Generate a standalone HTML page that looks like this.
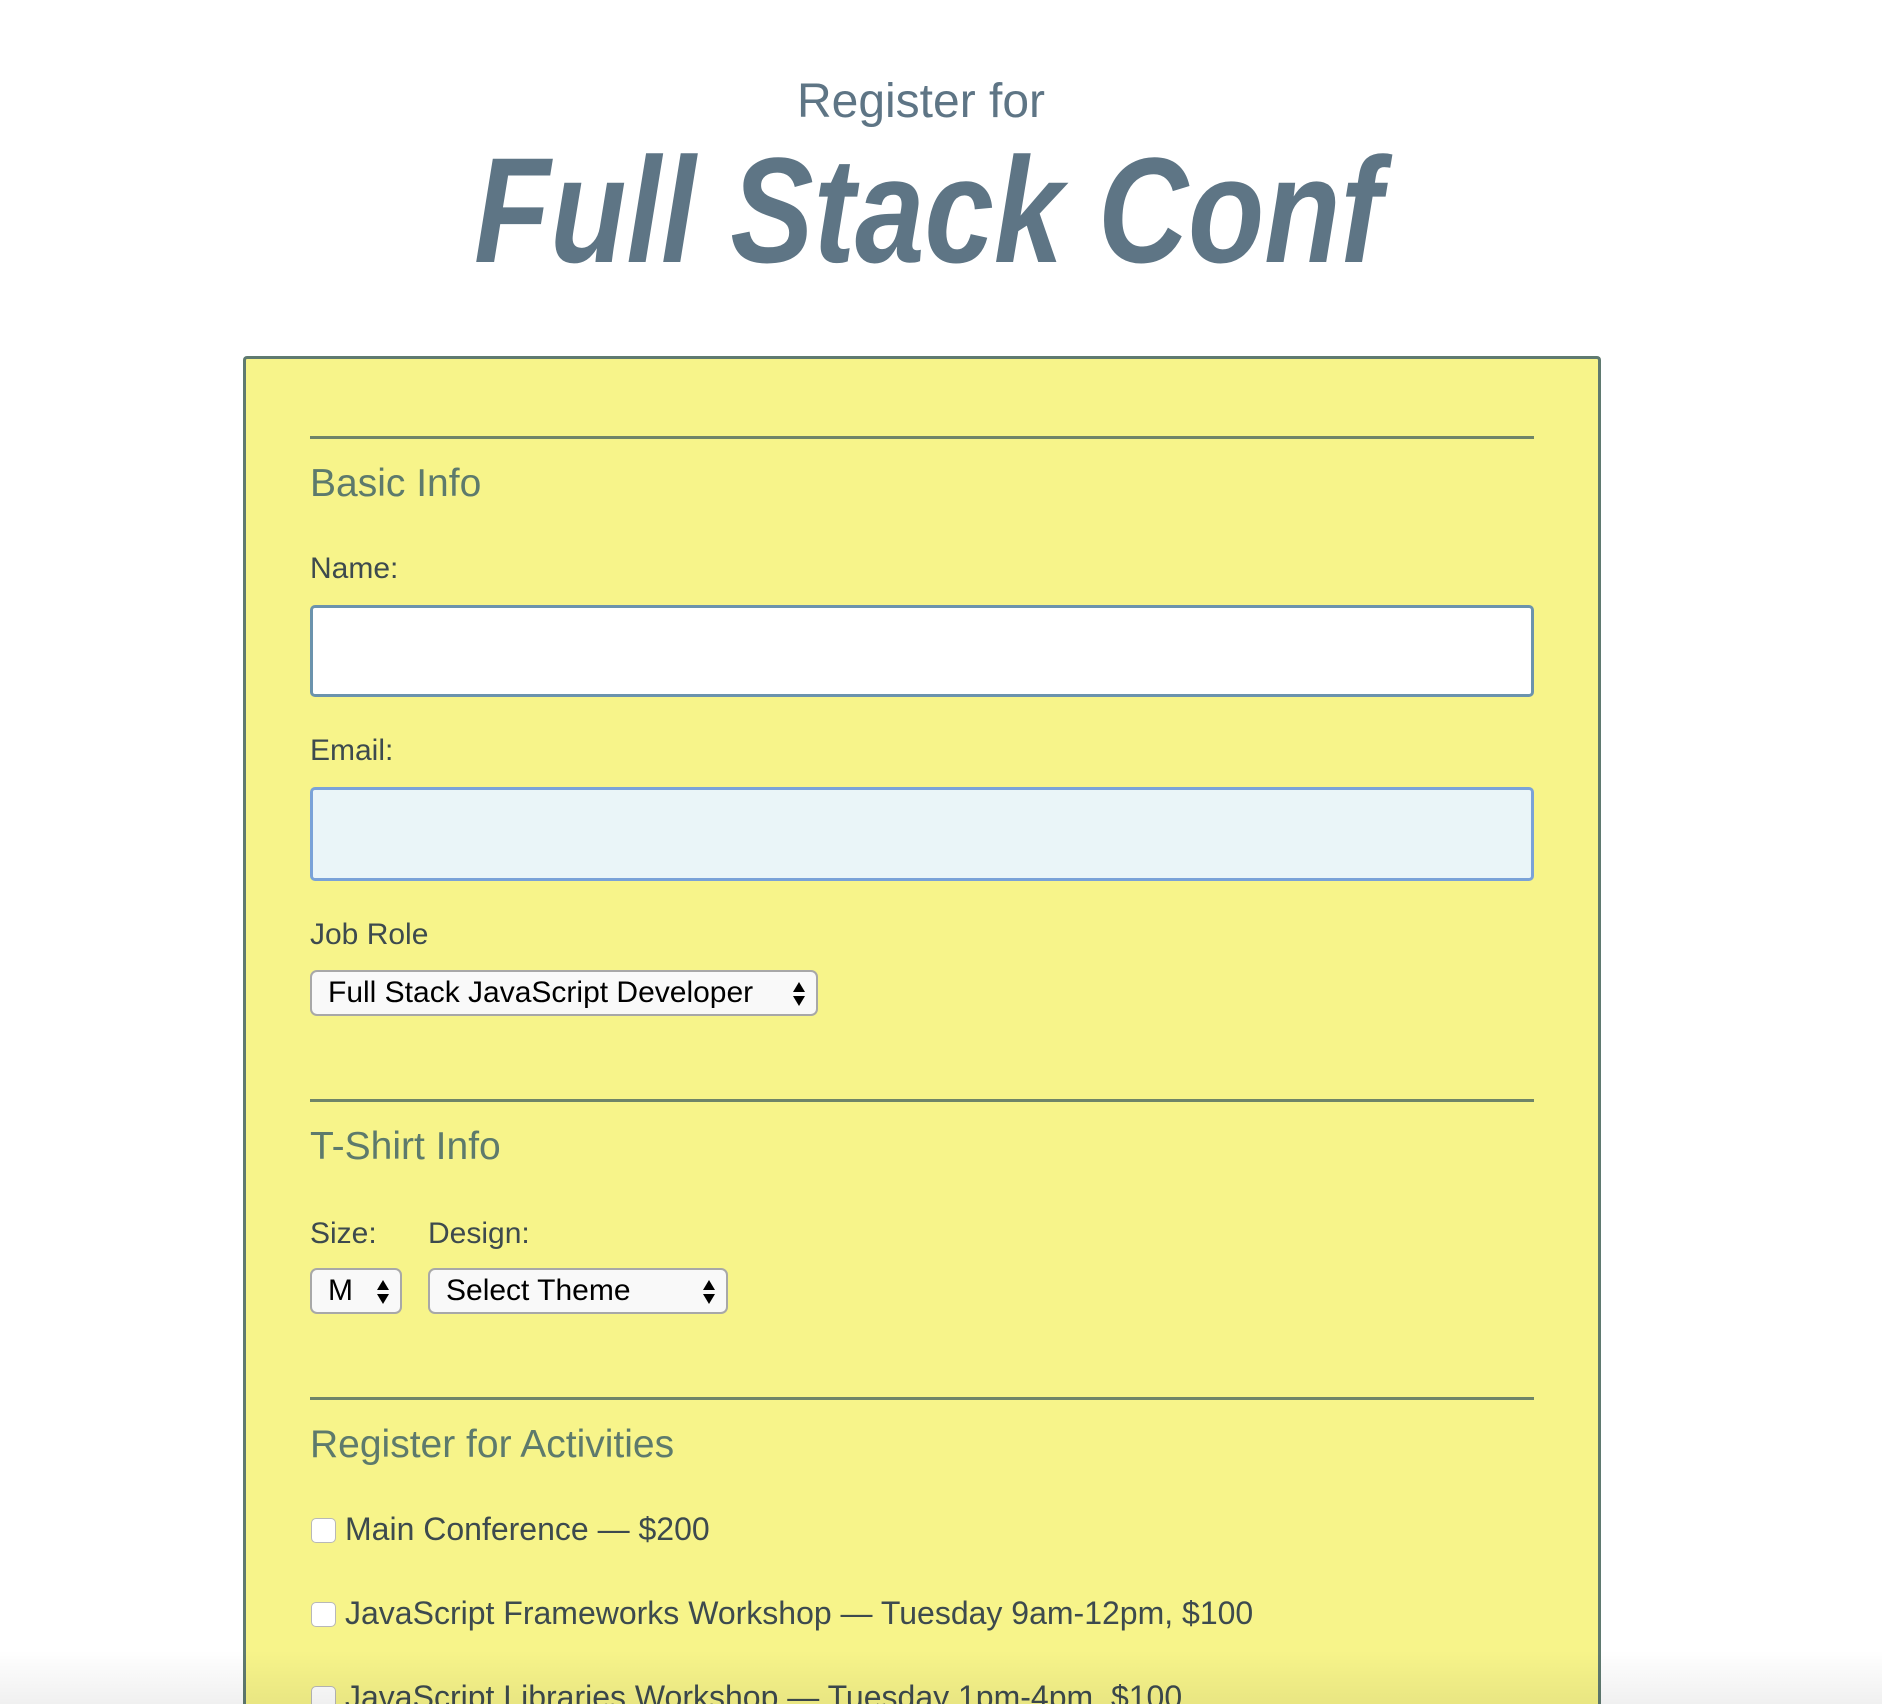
<!DOCTYPE html>
<html><head><meta charset="utf-8"><style>
html,body{margin:0;padding:0;width:1882px;height:1704px;overflow:hidden;background:#fff;font-family:"Liberation Sans",sans-serif;}
#w{position:relative;width:1882px;height:1704px;overflow:hidden;}
.a{position:absolute;}
.box{left:243px;top:356px;width:1358px;height:1348px;background:#f7f48a;border:3px solid #5f7a70;border-bottom:none;border-radius:4px 4px 0 0;box-sizing:border-box;}
.hr{left:310px;width:1224px;height:3px;background:#6f8468;}
.h{left:310px;font-size:39px;color:#5d7a6c;line-height:1;}
.l{left:310px;font-size:30px;color:#3d4a4e;line-height:1;}
.in{left:310px;width:1224px;border:3px solid #6b93ad;border-radius:5px;box-sizing:border-box;background:#fff;}
.sel{border:2px solid #a8a8a8;border-radius:7px;background:#f9f9f9;box-sizing:border-box;font-size:30px;color:#000;line-height:42px;padding-left:16px;}
.arr{position:absolute;right:10px;top:9px;}
.cb{left:311px;width:25px;height:25px;border:1px solid #b8b8b8;border-radius:5px;background:#fff;box-sizing:border-box;}
.t{font-size:32px;color:#3d4a4e;line-height:1;}
</style></head><body><div id="w">
<div class="a" style="left:0;width:1842px;top:78px;text-align:center;font-size:48px;color:#5e7585;line-height:1;">Register for</div>
<svg class="a" style="left:0;top:0" width="1882" height="300"><text x="474" y="262" textLength="908" lengthAdjust="spacingAndGlyphs" font-family="Liberation Sans" font-weight="bold" font-style="italic" font-size="150" fill="#5e7585">Full Stack Conf</text></svg>
<div class="a box"></div>
<div class="a hr" style="top:436px"></div>
<div class="a h" style="top:464px">Basic Info</div>
<div class="a l" style="top:554px">Name:</div>
<div class="a in" style="top:605px;height:92px"></div>
<div class="a l" style="top:736px">Email:</div>
<div class="a in" style="top:787px;height:94px;background:#eaf5f8;border-color:#7aa2d8"></div>
<div class="a l" style="top:920px">Job Role</div>
<div class="a sel" style="left:310px;top:970px;width:508px;height:46px">Full Stack JavaScript Developer<svg class="arr" width="14" height="26"><path d="M7 1L13 11H1Z M7 25L13 15H1Z" fill="#000"/></svg></div>
<div class="a hr" style="top:1099px"></div>
<div class="a h" style="top:1127px">T-Shirt Info</div>
<div class="a l" style="top:1219px">Size:</div>
<div class="a l" style="left:428px;top:1219px">Design:</div>
<div class="a sel" style="left:310px;top:1268px;width:92px;height:46px">M<svg class="arr" width="14" height="26"><path d="M7 1L13 11H1Z M7 25L13 15H1Z" fill="#000"/></svg></div>
<div class="a sel" style="left:428px;top:1268px;width:300px;height:46px">Select Theme<svg class="arr" width="14" height="26"><path d="M7 1L13 11H1Z M7 25L13 15H1Z" fill="#000"/></svg></div>
<div class="a hr" style="top:1397px"></div>
<div class="a h" style="top:1425px">Register for Activities</div>
<div class="a cb" style="top:1518px"></div>
<div class="a t" style="left:345px;top:1513px">Main Conference — $200</div>
<div class="a cb" style="top:1602px"></div>
<div class="a t" style="left:345px;top:1597px">JavaScript Frameworks Workshop — Tuesday 9am-12pm, $100</div>
<div class="a cb" style="top:1686px"></div>
<div class="a t" style="left:345px;top:1681px">JavaScript Libraries Workshop — Tuesday 1pm-4pm, $100</div>
<div class="a" style="left:0;top:1650px;width:1882px;height:54px;background:linear-gradient(rgba(0,0,0,0),rgba(0,0,0,0.06));"></div>
</div></body></html>
